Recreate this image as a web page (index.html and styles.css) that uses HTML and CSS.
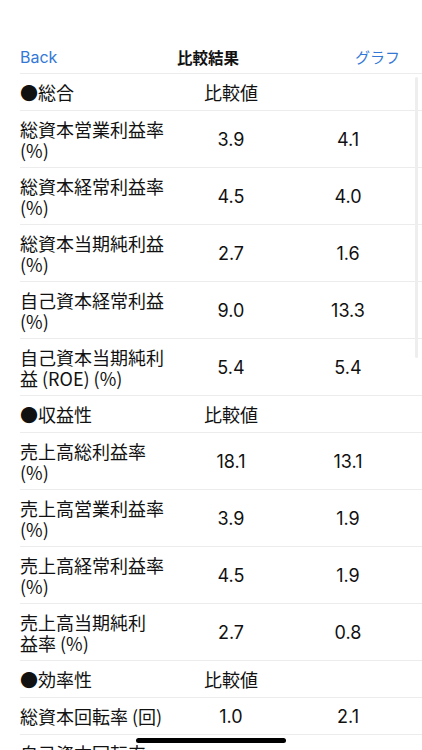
FILE: index.html
```html
<!DOCTYPE html>
<html lang="ja">

<head>
    <meta charset="UTF-8">
    <title>比較結果</title>
    <link rel="stylesheet" href="styles.css">
</head>

<body>
    <header class="navbar">
        <a class="nav-btn" href="#">Back</a>
        <h1>比較結果</h1>
        <a class="nav-btn nav-right" href="#">グラフ</a>
    </header>

    <main class="liste">
        <div class="raekke sektion"><span>●総合</span><span class="tal">比較値</span><span></span></div>
        <div class="raekke"><span>総資本営業利益率<br>(%)</span><span class="tal">3.9</span><span class="tal">4.1</span></div>
        <div class="raekke"><span>総資本経常利益率<br>(%)</span><span class="tal">4.5</span><span class="tal">4.0</span></div>
        <div class="raekke"><span>総資本当期純利益<br>(%)</span><span class="tal">2.7</span><span class="tal">1.6</span></div>
        <div class="raekke"><span>自己資本経常利益<br>(%)</span><span class="tal">9.0</span><span class="tal">13.3</span></div>
        <div class="raekke"><span>自己資本当期純利<br>益 (ROE) (%)</span><span class="tal">5.4</span><span class="tal">5.4</span></div>

        <div class="raekke sektion"><span>●収益性</span><span class="tal">比較値</span><span></span></div>
        <div class="raekke"><span>売上高総利益率<br>(%)</span><span class="tal">18.1</span><span class="tal">13.1</span></div>
        <div class="raekke"><span>売上高営業利益率<br>(%)</span><span class="tal">3.9</span><span class="tal">1.9</span></div>
        <div class="raekke"><span>売上高経常利益率<br>(%)</span><span class="tal">4.5</span><span class="tal">1.9</span></div>
        <div class="raekke"><span>売上高当期純利<br>益率 (%)</span><span class="tal">2.7</span><span class="tal">0.8</span></div>

        <div class="raekke sektion"><span>●効率性</span><span class="tal">比較値</span><span></span></div>
        <div class="raekke kort"><span>総資本回転率 (回)</span><span class="tal">1.0</span><span class="tal">2.1</span></div>
        <div class="raekke"><span>自己資本回転率 (回)</span><span class="tal">2.4</span><span class="tal">4.0</span></div>
    </main>

    <div class="scroll-bar"></div>
    <div class="home-bar"></div>
</body>

</html>
```

FILE: styles.css
```css
body {
    margin: 0;
    height: 750px;
    overflow: hidden;
    background: #fff;
    color: #111;
    font-family: Inter, "Noto Sans CJK JP", sans-serif;
}

.navbar {
    display: flex;
    align-items: center;
    justify-content: space-between;
    height: 33px;
    margin-top: 40px;
    margin-left: 20px;
    padding-right: 22px;
    border-bottom: 1px solid #ececec;
}

.navbar h1 {
    margin: 0 0 0 -4px;
    font-size: 15.5px;
    font-weight: bold;
    font-family: "Noto Sans CJK JP", sans-serif;
}

.nav-btn {
    width: 60px;
    text-decoration: none;
    color: #3478d6;
    font-size: 16px;
}

.nav-right {
    text-align: right;
    font-family: "Noto Sans CJK JP", sans-serif;
    font-size: 15px;
}

.liste {
    margin-left: 20px;
}

.raekke {
    display: grid;
    grid-template-columns: 155px 112px 122px;
    align-items: center;
    height: 56px;
    border-bottom: 1px solid #ececec;
    font-size: 18px;
    line-height: 21px;
}

.raekke span {
    font-family: "Noto Sans CJK JP", sans-serif;
}

.raekke span:first-child {
    padding-top: 2px;
}

.raekke .tal {
    text-align: center;
    font-family: Inter, "Noto Sans CJK JP", sans-serif;
}

.sektion,
.kort {
    height: 36px;
}

.sektion span:first-child,
.kort span:first-child {
    padding-top: 0;
}

.sektion .tal {
    font-family: "Noto Sans CJK JP", sans-serif;
}

.scroll-bar {
    position: absolute;
    top: 77px;
    left: 415px;
    width: 3px;
    height: 281px;
    border-radius: 2px;
    background: #eeeeee;
}

.home-bar {
    position: absolute;
    top: 738px;
    left: 136px;
    width: 150px;
    height: 5px;
    border-radius: 3px;
    background: #000;
}
```
